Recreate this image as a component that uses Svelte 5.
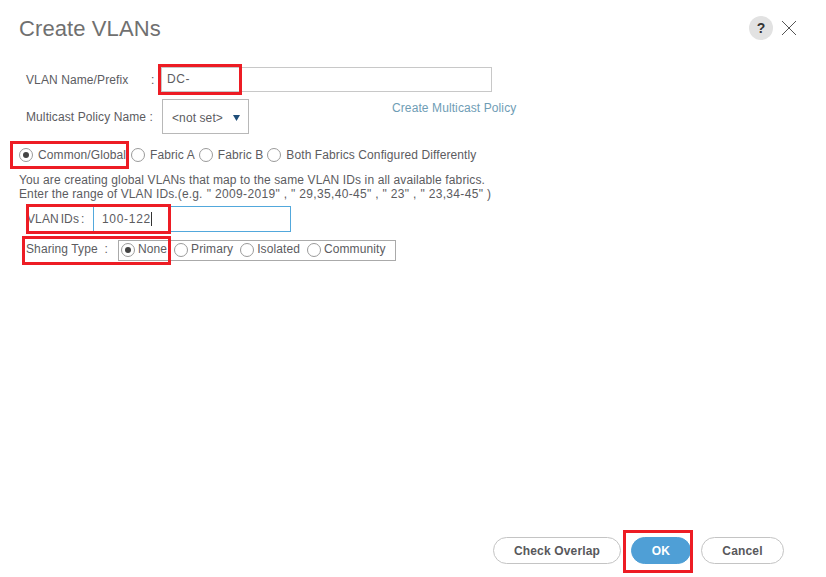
<script lang="ts">
  let name = 'DC-';
  let vlanIds = '100-122';
  const fabrics = [
    { label: 'Common/Global', on: true },
    { label: 'Fabric A', on: false },
    { label: 'Fabric B', on: false },
    { label: 'Both Fabrics Configured Differently', on: false }
  ];
  const sharing = [
    { label: 'None', on: true },
    { label: 'Primary', on: false },
    { label: 'Isolated', on: false },
    { label: 'Community', on: false }
  ];
</script>

<div class="dialog">
  <header class="head">
    <h1>Create VLANs</h1>
    <div class="tools">
      <span class="help">?</span>
      <svg class="close" width="16" height="16" viewBox="0 0 16 16">
        <path d="M1 1 L15 15 M15 1 L1 15" stroke="#555" stroke-width="1" fill="none" />
      </svg>
    </div>
  </header>

  <div class="form">
    <div class="row name-row">
      <span class="label">VLAN Name/Prefix</span>
      <span class="colon">:</span>
      <div class="text-input name-input">{name}</div>
    </div>

    <div class="row policy-row">
      <span class="label policy-label">Multicast Policy Name :</span>
      <div class="select">
        <span>&lt;not set&gt;</span>
        <svg width="7" height="6" viewBox="0 0 7 6"><path d="M0 0 H7 L3.5 6 Z" fill="#1f4e79" /></svg>
      </div>
      <span class="link">Create Multicast Policy</span>
    </div>

    <div class="row fabric-row">
      {#each fabrics as f}
        <span class="radio-item">
          <span class="radio" class:on={f.on}></span>
          <span>{f.label}</span>
        </span>
      {/each}
    </div>

    <p class="note">
      You are creating global VLANs that map to the same VLAN IDs in all available fabrics.<br />
      Enter the range of VLAN IDs.(e.g. <span class="examples">" 2009-2019" , " 29,35,40-45" , " 23" , " 23,34-45" )</span>
    </p>

    <div class="row ids-row">
      <span class="label ids-label">VLAN IDs :</span>
      <div class="text-input ids-input">{vlanIds}<span class="caret"></span></div>
    </div>

    <div class="row sharing-row">
      <span class="label sharing-label">Sharing Type &nbsp;:</span>
      <div class="sharing-box">
        {#each sharing as s}
          <span class="radio-item">
            <span class="radio" class:on={s.on}></span>
            <span class="raised">{s.label}</span>
          </span>
        {/each}
      </div>
    </div>
  </div>

  <footer class="foot">
    <button type="button" class="btn overlap">Check Overlap</button>
    <button type="button" class="btn ok">OK</button>
    <button type="button" class="btn cancel">Cancel</button>
  </footer>

  <!-- annotations drawn over the dialog -->
  <div class="mark m-name"></div>
  <div class="mark m-common"></div>
  <div class="mark m-ids"></div>
  <div class="mark m-sharing"></div>
  <div class="mark m-ok"></div>
</div>

<style>
  :global(body) {
    background: #fff;
  }
  .dialog {
    position: relative;
    width: 826px;
    height: 577px;
    box-sizing: border-box;
    display: flex;
    flex-direction: column;
    background: #fff;
    color: #5c5c5f;
    font-family: "Liberation Sans", Arial, sans-serif;
    font-size: 12px;
    letter-spacing: 0.1px;
    overflow: hidden;
  }
  .head {
    display: flex;
    justify-content: space-between;
    align-items: center;
    height: 56px;
    padding: 0 29px 0 19px;
  }
  h1 {
    margin: 2px 0 0;
    font-size: 22px;
    font-weight: 400;
    letter-spacing: 0.1px;
    color: #707070;
  }
  .tools {
    display: flex;
    align-items: center;
    gap: 8px;
  }
  .help {
    width: 24px;
    height: 24px;
    border-radius: 50%;
    background: #e2e2e2;
    color: #333;
    font-weight: 700;
    font-size: 14px;
    display: flex;
    align-items: center;
    justify-content: center;
  }
  .form {
    display: flex;
    flex-direction: column;
    padding: 11px 0 0 19px;
  }
  .row {
    display: flex;
    align-items: center;
  }
  .label {
    margin-left: 7px;
  }
  .name-row {
    height: 25px;
  }
  .name-row .label {
    width: 125px;
  }
  .colon {
    width: 10px;
  }
  .text-input {
    box-sizing: border-box;
    height: 25px;
    line-height: 23px;
    border: 1px solid #c8c8c8;
    padding-left: 5px;
    font-size: 12px;
  }
  .name-input {
    width: 331px;
    letter-spacing: 0.6px;
  }
  .policy-row {
    height: 35px;
    margin-top: 7px;
    position: relative;
  }
  .policy-label {
    width: 136px;
  }
  .select {
    box-sizing: border-box;
    width: 87px;
    height: 35px;
    border: 1px solid #b8b8b8;
    display: flex;
    align-items: center;
    justify-content: space-between;
    padding: 3px 8px 0 9px;
    font-size: 12px;
  }
  .link {
    margin: -18px 0 0 143px;
    color: #6f9db5;
  }
  .fabric-row {
    margin-top: 13px;
    height: 16px;
  }
  .radio-item {
    display: inline-flex;
    align-items: center;
    gap: 5px;
    margin-right: 4px;
    white-space: nowrap;
  }
  .radio {
    box-sizing: border-box;
    width: 14px;
    height: 14px;
    border: 1px solid #9a9a9a;
    border-radius: 50%;
    background: #fff;
    position: relative;
    flex: none;
  }
  .radio.on::after {
    content: "";
    position: absolute;
    left: 3px;
    top: 3px;
    width: 6px;
    height: 6px;
    border-radius: 50%;
    background: #444;
  }
  .fabric-row .radio-item:first-child {
    margin-right: 5px;
  }
  .note {
    margin: 10px 0 0;
    line-height: 14px;
    font-size: 12px;
    letter-spacing: 0.12px;
  }
  .examples {
    margin-left: 1px;
    letter-spacing: 0.33px;
  }
  .ids-row {
    margin-top: 5px;
    height: 26px;
  }
  .ids-label {
    margin-left: 8px;
    width: 66px;
    word-spacing: -1.5px;
  }
  .ids-input {
    width: 198px;
    height: 26px;
    line-height: 24px;
    border-color: #52a8dc;
    padding-left: 8px;
    letter-spacing: 0.7px;
  }
  .caret {
    display: inline-block;
    width: 1px;
    height: 14px;
    background: #333;
    vertical-align: -3px;
  }
  .sharing-row {
    margin-top: 8px;
    height: 21px;
  }
  .sharing-label {
    width: 92px;
    margin-bottom: 3px;
  }
  .sharing-box {
    box-sizing: border-box;
    width: 278px;
    height: 21px;
    border: 1px solid #aaa;
    display: flex;
    align-items: center;
    padding-left: 1px;
  }
  .sharing-box .radio-item {
    gap: 3px;
    margin-right: 7px;
  }
  .sharing-box .radio-item:first-child {
    margin-left: 1px;
    margin-right: 7px;
  }
  .sharing-box .radio {
    margin-bottom: 1px;
  }
  .raised {
    margin-bottom: 3px;
  }
  .foot {
    margin-top: auto;
    display: flex;
    justify-content: flex-end;
    gap: 10px;
    padding: 0 42px 13px 0;
  }
  .btn {
    height: 27px;
    border-radius: 14px;
    border: 1px solid #c4c4c4;
    background: #fff;
    color: #58585b;
    font-family: inherit;
    font-size: 12px;
    font-weight: 700;
    letter-spacing: 0.15px;
    padding: 0;
  }
  .overlap {
    width: 128px;
  }
  .ok {
    width: 60px;
    background: #4f9fd6;
    border-color: #4f9fd6;
    color: #fff;
  }
  .cancel {
    width: 83px;
  }
  .mark {
    position: absolute;
    box-sizing: border-box;
    border: 3px solid #ed1c24;
  }
  .m-name {
    left: 158px;
    top: 64px;
    width: 84px;
    height: 31px;
  }
  .m-common {
    left: 10px;
    top: 141px;
    width: 119px;
    height: 28px;
  }
  .m-ids {
    left: 26px;
    top: 204px;
    width: 145px;
    height: 30px;
  }
  .m-sharing {
    left: 22px;
    top: 236px;
    width: 149px;
    height: 29px;
  }
  .m-ok {
    left: 623px;
    top: 530px;
    width: 70px;
    height: 43px;
  }
</style>
